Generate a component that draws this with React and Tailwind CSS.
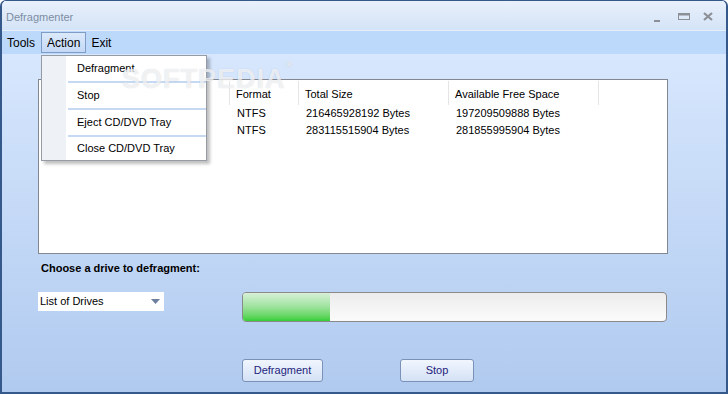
import { useState } from 'react'

const drives = [
  { name: 'C:\\', label: 'Local Disk', format: 'NTFS', total: '216465928192 Bytes', free: '197209509888 Bytes' },
  { name: 'D:\\', label: 'Local Disk', format: 'NTFS', total: '283115515904 Bytes', free: '281855995904 Bytes' },
]

const menuItems = ['Defragment', 'Stop', 'Eject CD/DVD Tray', 'Close CD/DVD Tray']

function TitleButtons() {
  return (
    <div className="flex items-center pr-[13px] pt-[3px]">
      <svg width="8" height="14" viewBox="0 0 8 14">
        <rect x="1" y="10" width="6" height="2" fill="#8c9096" />
      </svg>
      <svg className="ml-[17px]" width="12" height="14" viewBox="0 0 12 14">
        <rect x="0.5" y="3.5" width="11" height="6" fill="none" stroke="#8c9096" />
        <rect x="0.5" y="3.5" width="11" height="2" fill="#8c9096" />
      </svg>
      <svg className="ml-[13px]" width="10" height="14" viewBox="0 0 10 14">
        <path d="M1 3 L9 10 M9 3 L1 10" stroke="#8c9096" strokeWidth="2.2" />
      </svg>
    </div>
  )
}

function ActionMenu() {
  return (
    <div className="absolute left-[39px] top-[54px] z-10 w-[166px] border border-[#979ba3] bg-white shadow-[3px_3px_3px_rgba(0,0,0,0.25)]">
      <div className="flex">
        <div className="w-[24px] bg-[#eef1f6]" />
        <ul className="flex-1 pl-[2px]">
          {menuItems.map((item, i) => (
            <li key={item}>
              <div className="flex h-[25px] items-center pl-[9px] text-[11px] text-black last:h-[23px]">
                {item}
              </div>
              {i < menuItems.length - 1 && (
                <div className="h-[2px] bg-[#c5d9f3]" />
              )}
            </li>
          ))}
        </ul>
      </div>
    </div>
  )
}

function DriveList() {
  return (
    <div className="ml-[36px] h-[175px] w-[630px] border border-[#828790] bg-white">
      <div className="flex h-[26px] items-center text-[11px] text-black">
        <div className="h-[24px] w-[191px] border-r border-[#e5e5e5]" />
        <div className="flex h-[24px] w-[69px] items-center border-r border-[#e5e5e5] pl-[6px] pt-[2px]">Format</div>
        <div className="flex h-[24px] w-[150px] items-center border-r border-[#e5e5e5] pl-[6px] pt-[2px]">Total Size</div>
        <div className="flex h-[24px] w-[150px] items-center border-r border-[#e5e5e5] pl-[6px] pt-[2px]">Available Free Space</div>
      </div>
      <div className="-mt-[1px]">
        {drives.map((d) => (
          <div key={d.name} className="flex h-[17px] items-center text-[11px] text-black">
            <div className="w-[96px] pl-[6px]">{d.name}</div>
            <div className="w-[96px] pl-[6px]">{d.label}</div>
            <div className="w-[69px] pl-[6px]">{d.format}</div>
            <div className="w-[150px] pl-[6px]">{d.total}</div>
            <div className="w-[150px] pl-[6px]">{d.free}</div>
          </div>
        ))}
      </div>
    </div>
  )
}

export default function App() {
  const [progress] = useState(20.5)

  return (
    <div
      className="relative h-[394px] w-[728px] overflow-hidden rounded-t-[6px] border-2 border-t border-[#35598a] bg-[#d6e6fc]"
      style={{ fontFamily: '"Liberation Sans", Arial, sans-serif' }}
    >
      <div className="flex h-[29px] items-center justify-between bg-gradient-to-b from-[#e8f0fb] to-[#d4e3f7]">
        <span className="pl-[4px] pt-[3px] text-[11px] text-[#7c8ca3]">Defragmenter</span>
        <TitleButtons />
      </div>
      <div className="h-[1px] bg-[#e6eefa]" />
      <div className="flex h-[23px] items-center bg-[#bcd9fc] pl-[2px] text-[12px] text-black">
        <span className="px-[3px]">Tools</span>
        <span className="ml-[3px] flex h-[21px] items-center border border-[#7e9cc6] bg-gradient-to-b from-[#dce9fb] to-[#c4d9f6] px-[5px]">
          Action
        </span>
        <span className="px-[5px]">Exit</span>
      </div>

      <div className="flex h-[338px] flex-col bg-gradient-to-b from-[#d7e7fd] to-[#b0caef] pt-[25px]">
        <DriveList />

        <p className="ml-[39px] mt-[6px] text-[11px] font-bold text-black">
          Choose a drive to defragment:
        </p>

        <div className="mt-[15px] flex items-start">
          <div className="ml-[36px] flex h-[19px] w-[126px] items-center justify-between bg-white pl-[2px] pr-[4px] text-[11px] text-black">
            <span>List of Drives</span>
            <svg width="9" height="5" viewBox="0 0 9 5">
              <path d="M0 0 H9 L4.5 5 Z" fill="#6d7f9f" />
            </svg>
          </div>
          <div className="ml-[78px] flex h-[30px] w-[425px] overflow-hidden rounded-[4px] border border-[#8a8a8a] bg-gradient-to-b from-[#ececec] to-[#fbfbfb]">
            <div
              className="h-full bg-gradient-to-b from-[#d8f0d8] via-[#9ce29c] to-[#36cf36]"
              style={{ width: `${progress}%` }}
            />
          </div>
        </div>

        <div className="mt-[37px] flex text-[11px] text-[#23237a]">
          <button className="ml-[240px] h-[23px] w-[81px] rounded-[3px] border border-[#7b92b8] bg-gradient-to-b from-[#f1f6fe] to-[#d4e1f5]">
            Defragment
          </button>
          <button className="ml-[77px] h-[23px] w-[74px] rounded-[3px] border border-[#7b92b8] bg-gradient-to-b from-[#f1f6fe] to-[#d4e1f5]">
            Stop
          </button>
        </div>
      </div>

      <ActionMenu />

      <div className="pointer-events-none absolute left-[120px] top-[58px] z-20 text-[27px] font-bold tracking-[1px] text-white/70 [text-shadow:0_0_1px_rgba(120,130,150,0.35)]">
        SOFTPEDIA<span className="align-top text-[9px]">®</span>
      </div>
    </div>
  )
}
